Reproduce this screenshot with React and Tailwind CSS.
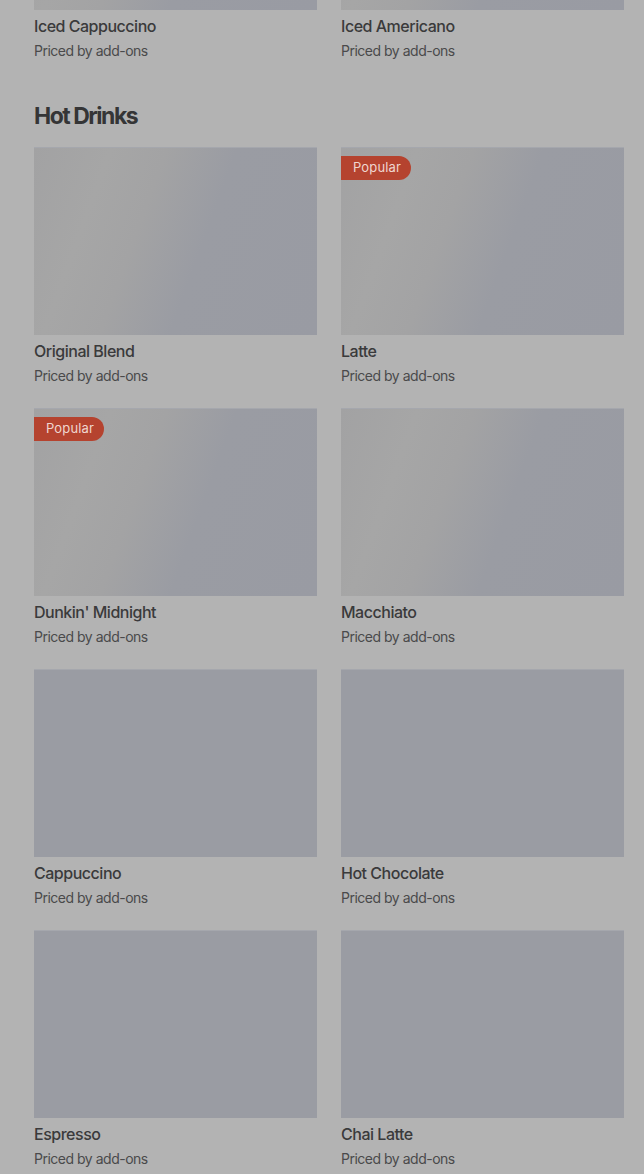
const shimmer =
  'bg-[linear-gradient(110deg,#a2a2a3_0%,#a6a6a6_22%,#a3a3a4_38%,#9a9ca3_58%,#999ba3_100%)]';
const plain = 'bg-[#9a9ca3]';

const MenuCard = ({ name, popular, loading }) => (
  <div className="flex flex-col">
    <div
      className={`relative h-[188px] w-full border-t border-[#a5a7ad] ${loading ? shimmer : plain}`}
    >
      {popular && (
        <span className="absolute left-0 top-[8px] h-[24px] pl-[12px] pr-[10px] flex items-center rounded-r-full bg-[#b5432f] text-[13px] text-[#efd6cf] tracking-[0.01em]">
          Popular
        </span>
      )}
    </div>
    <p className="mt-1 text-[16px] leading-6 font-medium text-[#3a3a3b] tracking-[-0.03em]">
      {name}
    </p>
    <p className="mt-[2px] text-[14px] leading-[22px] text-[#4a4a4b] tracking-[-0.035em]">
      Priced by add-ons
    </p>
  </div>
);

const hotDrinks = [
  { name: 'Original Blend', loading: true },
  { name: 'Latte', popular: true, loading: true },
  { name: "Dunkin' Midnight", popular: true, loading: true },
  { name: 'Macchiato', loading: true },
  { name: 'Cappuccino' },
  { name: 'Hot Chocolate' },
  { name: 'Espresso' },
  { name: 'Chai Latte' },
];

export default function App() {
  return (
    <div
      className="min-h-screen h-[1174px] overflow-hidden bg-[#b3b3b3] pl-[34px] pr-[20px]"
      style={{ fontFamily: 'Inter, "Noto Sans", sans-serif' }}
    >
      <div className="-mt-[178px] grid grid-cols-[283px_283px] gap-x-6">
        <MenuCard name="Iced Cappuccino" loading />
        <MenuCard name="Iced Americano" loading />
      </div>

      <h2 className="mt-[38px] text-[23px] leading-8 font-bold tracking-[-0.065em] text-[#353536]">
        Hot Drinks
      </h2>

      <div className="mt-[15px] grid grid-cols-[283px_283px] gap-x-6 gap-y-[21px]">
        {hotDrinks.map((d) => (
          <MenuCard key={d.name} {...d} />
        ))}
      </div>
    </div>
  );
}
